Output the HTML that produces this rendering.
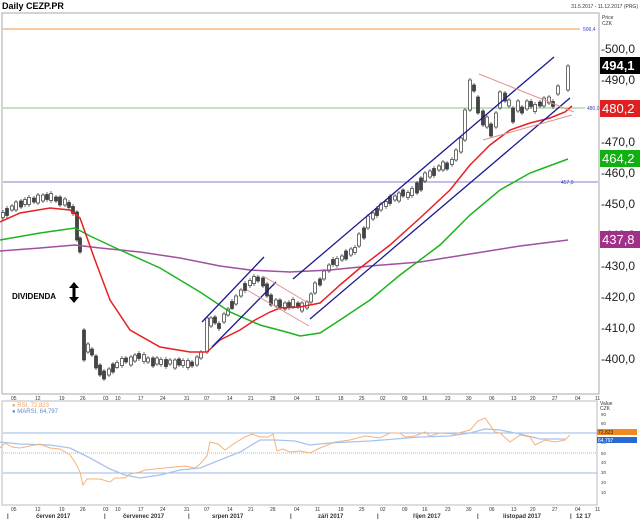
<!DOCTYPE html>
<html><head><meta charset="utf-8"><style>
html,body{margin:0;padding:0;background:#fff;width:640px;height:519px;overflow:hidden}
svg{display:block;font-family:"Liberation Sans",sans-serif}
.w{fill:#fff;stroke:#333;stroke-width:.7}.d{fill:#444;stroke:#333;stroke-width:.7}
</style></head><body>
<svg width="640" height="519" viewBox="0 0 640 519" xmlns="http://www.w3.org/2000/svg">
<text x="2" y="9" font-size="9" font-weight="bold">Daily CEZP.PR</text>
<text x="638" y="8" font-size="5" text-anchor="end" fill="#333">31.5.2017 - 11.12.2017 (PRG)</text>
<rect x="2" y="13" width="597" height="381" fill="none" stroke="#aaa" stroke-width="1"/>
<text x="602" y="19" font-size="5" fill="#333">Price</text>
<text x="602" y="25" font-size="5" fill="#333">CZK</text>
<line x1="3" y1="29" x2="580" y2="29" stroke="#f7c9a0" stroke-width="2"/>
<text x="583" y="31" font-size="5" fill="#4040c0">506,4</text>
<line x1="3" y1="108" x2="585" y2="108" stroke="#86c486" stroke-width="1"/>
<text x="587" y="110" font-size="5" fill="#4040c0">480,0</text>
<line x1="3" y1="182" x2="598" y2="182" stroke="#8080d0" stroke-width="1"/>
<text x="561" y="184" font-size="5" fill="#4040c0">457,0</text>
<path stroke="#333" stroke-width=".7" fill="none" d="M3 210V220M7 206V218M12 204V212M16 200V212M21 199V209M25 197V207M29 195V207M34 196V204M38 193V205M43 193V203M47 192V202M51 191V203M56 195V203M60 195V207M65 197V207M69 200V210M73 204V216M77 210V242M80 236V254M84 328V362M88 342V354M92 347V357M96 354V370M100 363V377M104 369V381M109 367V377M113 362V374M117 360V369M122 356V368M126 356V364M131 355V367M135 353V363M139 351V361M144 352V364M148 356V364M153 356V368M157 356V366M161 357V367M166 357V369M170 358V366M175 358V370M179 357V367M183 358V368M188 358V370M192 360V368M197 355V367M201 350V360M207 316V354M211 316V328M215 315V325M219 321V331M224 312V324M228 307V317M232 299V310M236 294V306M241 288V298M245 281V293M250 278V288M254 274V286M258 275V283M263 276V288M267 282V298M271 293V307M276 298V308M280 298V310M285 301V311M289 300V310M293 297V309M298 301V309M302 301V313M307 300V310M311 292V304M315 281V295M320 277V287M324 269V281M329 263V273M333 257V267M337 256V268M342 254V262M346 249V261M351 247V257M355 245V255M359 232V248M364 226V240M368 214V230M373 211V221M377 206V218M381 202V212M386 199V209M390 194V206M395 194V202M399 191V203M403 188V198M408 190V200M412 186V198M417 181V195M421 176V192M425 171V183M430 169V179M434 166V178M439 164V172M443 160V172M447 161V171M452 157V167M456 148V162M461 136V154M465 108V142M470 78V112M474 83V93M478 95V115M483 109V127M487 115V129M491 122V138M496 111V129M500 90V110M505 91V103M509 98V108M513 106V124M518 99V113M522 105V115M527 99V111M531 99V109M535 102V114M540 100V108M544 96V108M549 95V105M553 99V109M558 84V96M568 64V92"/>
<g>
<rect class="w" x="1.5" y="212.5" width="3" height="5"/><rect class="d" x="5.5" y="208.5" width="3" height="7"/><rect class="w" x="10.5" y="206" width="3" height="4"/><rect class="w" x="14.5" y="202" width="3" height="8"/><rect class="d" x="19.5" y="201" width="3" height="6"/><rect class="w" x="23.5" y="199.5" width="3" height="5"/><rect class="w" x="27.5" y="197.5" width="3" height="7"/><rect class="d" x="32.5" y="198" width="3" height="4"/><rect class="w" x="36.5" y="195" width="3" height="8"/><rect class="w" x="41.5" y="195" width="3" height="6"/><rect class="d" x="45.5" y="194.5" width="3" height="5"/><rect class="w" x="49.5" y="193.5" width="3" height="7"/><rect class="d" x="54.5" y="197" width="3" height="4"/><rect class="d" x="58.5" y="197" width="3" height="8"/><rect class="w" x="63.5" y="199" width="3" height="6"/><rect class="d" x="67.5" y="202.5" width="3" height="5"/><rect class="d" x="71.5" y="206.5" width="3" height="7"/><rect class="d" x="75.5" y="212" width="3" height="28"/><rect class="d" x="78.5" y="238" width="3" height="14"/><rect class="d" x="82.5" y="330" width="3" height="30"/><rect class="w" x="86.5" y="344" width="3" height="8"/><rect class="d" x="90.5" y="349" width="3" height="6"/><rect class="d" x="94.5" y="356" width="3" height="12"/><rect class="d" x="98.5" y="365" width="3" height="10"/><rect class="d" x="102.5" y="371" width="3" height="8"/><rect class="w" x="107.5" y="369" width="3" height="6"/><rect class="d" x="111.5" y="364" width="3" height="8"/><rect class="w" x="115.5" y="362.5" width="3" height="5"/><rect class="w" x="120.5" y="358.5" width="3" height="7"/><rect class="d" x="124.5" y="358" width="3" height="4"/><rect class="w" x="129.5" y="357" width="3" height="8"/><rect class="w" x="133.5" y="355" width="3" height="6"/><rect class="d" x="137.5" y="353.5" width="3" height="5"/><rect class="w" x="142.5" y="354.5" width="3" height="7"/><rect class="w" x="146.5" y="358" width="3" height="4"/><rect class="d" x="151.5" y="358" width="3" height="8"/><rect class="w" x="155.5" y="358" width="3" height="6"/><rect class="w" x="159.5" y="359.5" width="3" height="5"/><rect class="d" x="164.5" y="359.5" width="3" height="7"/><rect class="w" x="168.5" y="360" width="3" height="4"/><rect class="w" x="173.5" y="360" width="3" height="8"/><rect class="d" x="177.5" y="359" width="3" height="6"/><rect class="w" x="181.5" y="360.5" width="3" height="5"/><rect class="w" x="186.5" y="360.5" width="3" height="7"/><rect class="d" x="190.5" y="362" width="3" height="4"/><rect class="w" x="195.5" y="357" width="3" height="8"/><rect class="w" x="199.5" y="352" width="3" height="6"/><rect class="w" x="205.5" y="318" width="3" height="34"/><rect class="w" x="209.5" y="318" width="3" height="8"/><rect class="d" x="213.5" y="317" width="3" height="6"/><rect class="d" x="217.5" y="323.5" width="3" height="5"/><rect class="w" x="222.5" y="314" width="3" height="8"/><rect class="w" x="226.5" y="309" width="3" height="6"/><rect class="d" x="230.5" y="301.5" width="3" height="7"/><rect class="w" x="234.5" y="296" width="3" height="8"/><rect class="w" x="239.5" y="290" width="3" height="6"/><rect class="d" x="243.5" y="283.5" width="3" height="7"/><rect class="w" x="248.5" y="280.5" width="3" height="5"/><rect class="w" x="252.5" y="276.5" width="3" height="7"/><rect class="d" x="256.5" y="277" width="3" height="4"/><rect class="d" x="261.5" y="278" width="3" height="8"/><rect class="d" x="265.5" y="284" width="3" height="12"/><rect class="d" x="269.5" y="295" width="3" height="10"/><rect class="w" x="274.5" y="300" width="3" height="6"/><rect class="d" x="278.5" y="300" width="3" height="8"/><rect class="w" x="283.5" y="303" width="3" height="6"/><rect class="d" x="287.5" y="302.5" width="3" height="5"/><rect class="w" x="291.5" y="299.5" width="3" height="7"/><rect class="d" x="296.5" y="303" width="3" height="4"/><rect class="w" x="300.5" y="303" width="3" height="8"/><rect class="w" x="305.5" y="302" width="3" height="6"/><rect class="w" x="309.5" y="294" width="3" height="8"/><rect class="w" x="313.5" y="283" width="3" height="10"/><rect class="d" x="318.5" y="279" width="3" height="6"/><rect class="w" x="322.5" y="271" width="3" height="8"/><rect class="w" x="327.5" y="265" width="3" height="6"/><rect class="d" x="331.5" y="259.5" width="3" height="5"/><rect class="w" x="335.5" y="258.5" width="3" height="7"/><rect class="w" x="340.5" y="256" width="3" height="4"/><rect class="d" x="344.5" y="251" width="3" height="8"/><rect class="w" x="349.5" y="249" width="3" height="6"/><rect class="w" x="353.5" y="247.5" width="3" height="5"/><rect class="w" x="357.5" y="234" width="3" height="12"/><rect class="d" x="362.5" y="228" width="3" height="10"/><rect class="w" x="366.5" y="216" width="3" height="12"/><rect class="w" x="371.5" y="213" width="3" height="6"/><rect class="d" x="375.5" y="208.5" width="3" height="7"/><rect class="w" x="379.5" y="204" width="3" height="6"/><rect class="w" x="384.5" y="201.5" width="3" height="5"/><rect class="d" x="388.5" y="196.5" width="3" height="7"/><rect class="w" x="393.5" y="196" width="3" height="4"/><rect class="w" x="397.5" y="193" width="3" height="8"/><rect class="d" x="401.5" y="190" width="3" height="6"/><rect class="w" x="406.5" y="192.5" width="3" height="5"/><rect class="w" x="410.5" y="188.5" width="3" height="7"/><rect class="d" x="415.5" y="183" width="3" height="10"/><rect class="d" x="419.5" y="178" width="3" height="12"/><rect class="w" x="423.5" y="173" width="3" height="8"/><rect class="w" x="428.5" y="171" width="3" height="6"/><rect class="d" x="432.5" y="168.5" width="3" height="7"/><rect class="w" x="437.5" y="166" width="3" height="4"/><rect class="w" x="441.5" y="162" width="3" height="8"/><rect class="d" x="445.5" y="163" width="3" height="6"/><rect class="w" x="450.5" y="159.5" width="3" height="5"/><rect class="w" x="454.5" y="150" width="3" height="10"/><rect class="w" x="459.5" y="138" width="3" height="14"/><rect class="w" x="463.5" y="110" width="3" height="30"/><rect class="w" x="468.5" y="80" width="3" height="30"/><rect class="d" x="472.5" y="85" width="3" height="6"/><rect class="d" x="476.5" y="97" width="3" height="16"/><rect class="d" x="481.5" y="111" width="3" height="14"/><rect class="w" x="485.5" y="117" width="3" height="10"/><rect class="d" x="489.5" y="124" width="3" height="12"/><rect class="w" x="494.5" y="113" width="3" height="14"/><rect class="w" x="498.5" y="92" width="3" height="16"/><rect class="d" x="503.5" y="93" width="3" height="8"/><rect class="w" x="507.5" y="100" width="3" height="6"/><rect class="d" x="511.5" y="108" width="3" height="14"/><rect class="w" x="516.5" y="101" width="3" height="10"/><rect class="d" x="520.5" y="107" width="3" height="6"/><rect class="w" x="525.5" y="101" width="3" height="8"/><rect class="d" x="529.5" y="101.5" width="3" height="5"/><rect class="w" x="533.5" y="104.5" width="3" height="7"/><rect class="d" x="538.5" y="102" width="3" height="4"/><rect class="w" x="542.5" y="98" width="3" height="8"/><rect class="w" x="547.5" y="97" width="3" height="6"/><rect class="d" x="551.5" y="101.5" width="3" height="5"/><rect class="w" x="556.5" y="86" width="3" height="8"/><rect class="w" x="566.5" y="66" width="3" height="24"/>
</g>
<polyline fill="none" stroke="#a050a0" stroke-width="1.5" points="0,251 40,248 75,245 100,248 140,252 180,258 220,266 250,270 290,272 330,270 370,266 420,262 470,254 520,246 568,240"/>
<polyline fill="none" stroke="#1db31d" stroke-width="1.5" points="0,240 40,233 75,228 90,236 120,250 160,268 200,292 230,312 260,325 290,333 300,336 320,333 340,320 370,300 400,275 440,245 470,215 500,190 530,173 568,159"/>
<polyline fill="none" stroke="#e82020" stroke-width="1.5" points="0,222 20,213 50,208 70,210 80,218 95,260 110,300 130,330 160,347 190,352 207,352 220,340 240,330 255,320 270,312 280,308 300,307 320,303 340,285 360,268 390,245 420,218 450,190 470,165 490,145 510,130 530,123 550,118 565,112 572,106"/>
<g stroke="#1a1a90" stroke-width="1.3">
<line x1="212" y1="347" x2="276" y2="282"/>
<line x1="202" y1="322" x2="264" y2="257"/>
<line x1="293" y1="279" x2="554" y2="57"/>
<line x1="310" y1="319" x2="570" y2="98"/>
</g>
<g stroke="#e09090" stroke-width="1">
<line x1="479" y1="74" x2="574" y2="112"/>
<line x1="483" y1="140" x2="572" y2="115"/>
<line x1="263" y1="276" x2="310" y2="304"/>
<line x1="247" y1="290" x2="309" y2="326"/>
</g>
<text x="12" y="299" font-size="8" font-weight="bold">DIVIDENDA</text>
<path d="M74,282 L69,288 H72.5 V297 H69 L74,303 L79,297 H75.5 V288 H79 Z" fill="#000"/>
<g font-size="12" fill="#222">
<text x="601" y="53">-500,0</text><text x="601" y="84">-490,0</text><text x="601" y="146">-470,0</text><text x="601" y="177">-460,0</text><text x="601" y="208">-450,0</text><text x="601" y="239">-440,0</text><text x="601" y="270">-430,0</text><text x="601" y="301">-420,0</text><text x="601" y="332">-410,0</text><text x="601" y="363">-400,0</text>
</g>
<rect x="600" y="57" width="40" height="17" fill="#000"/><text x="602" y="70" font-size="13" font-weight="bold" fill="#fff">494,1</text>
<rect x="600" y="100" width="40" height="17" fill="#e02020"/><text x="602" y="113" font-size="13" fill="#fff">480,2</text>
<rect x="600" y="150" width="40" height="17" fill="#10b010"/><text x="602" y="163" font-size="13" fill="#fff">464,2</text>
<rect x="600" y="231" width="40" height="17" fill="#a0308a"/><text x="602" y="244" font-size="13" fill="#fff">437,8</text>
<g font-size="5" fill="#333">
<text x="11" y="400">05</text><text x="35" y="400">12</text><text x="59" y="400">19</text><text x="80" y="400">26</text><text x="103" y="400">03</text><text x="115" y="400">10</text><text x="138" y="400">17</text><text x="160" y="400">24</text><text x="184" y="400">31</text><text x="204" y="400">07</text><text x="227" y="400">14</text><text x="248" y="400">21</text><text x="270" y="400">28</text><text x="294" y="400">04</text><text x="315" y="400">11</text><text x="338" y="400">18</text><text x="359" y="400">25</text><text x="380" y="400">02</text><text x="402" y="400">09</text><text x="422" y="400">16</text><text x="445" y="400">23</text><text x="466" y="400">30</text><text x="489" y="400">06</text><text x="511" y="400">13</text><text x="530" y="400">20</text><text x="552" y="400">27</text><text x="575" y="400">04</text><text x="595" y="400">11</text>
</g>
<rect x="2" y="401" width="595" height="104" fill="none" stroke="#bbb"/>
<text x="12" y="407" font-size="6" fill="#f0a060">● RSI, 72,823</text>
<text x="12" y="413" font-size="6" fill="#5a8fd0">● MARSI, 64,797</text>
<text x="600" y="405" font-size="5" fill="#333">Value</text><text x="600" y="410" font-size="5" fill="#333">CZK</text>
<line x1="3" y1="433" x2="597" y2="433" stroke="#9ab8e8"/>
<line x1="3" y1="453" x2="597" y2="453" stroke="#9ab8e8" stroke-dasharray="1,1"/>
<line x1="3" y1="473" x2="597" y2="473" stroke="#9ab8e8"/>
<g font-size="4.5" fill="#444"><text x="601" y="416">90</text><text x="601" y="425">80</text><text x="601" y="444">60</text><text x="601" y="455">50</text><text x="601" y="464">40</text><text x="601" y="474">30</text><text x="601" y="484">20</text><text x="601" y="494">10</text></g>
<polyline fill="none" stroke="#a8c4ec" stroke-width="1.3" points="0,442 20,444 50,445 70,448 90,458 110,469 125,475 140,478 160,475 180,470 200,468 220,460 240,452 260,440 275,440 295,441 310,445 330,443 370,441 420,437 450,436 470,433 485,429 500,430 520,434 540,439 565,439"/>
<polyline fill="none" stroke="#f5b27a" stroke-width="1" points="0,448 5,443 12,447 20,448 30,446 40,444 50,448 60,449 70,455 75,462 80,472 83,485 87,479 100,479 110,482 115,478 125,478 130,474 140,472 145,470 155,469 165,468 175,467 185,466 195,468 200,464 207,456 210,442 218,444 225,450 235,443 245,437 252,434 260,437 268,437 273,434 277,451 283,449 290,452 300,451 310,453 320,448 335,442 350,440 365,436 380,438 390,433 400,433 405,437 415,436 425,432 430,436 440,433 455,434 470,430 478,421 485,418 490,425 495,432 500,433 510,442 520,435 530,437 535,445 545,440 555,442 565,440 570,435"/>
<rect x="597" y="429" width="40" height="6" fill="#f08a20"/><text x="598" y="434" font-size="5" fill="#222">72,823</text>
<rect x="597" y="437" width="40" height="6" fill="#2a6ad0"/><text x="598" y="442" font-size="5" fill="#fff">64,797</text>
<g font-size="5" fill="#333">
<text x="11" y="511">05</text><text x="35" y="511">12</text><text x="59" y="511">19</text><text x="80" y="511">26</text><text x="103" y="511">03</text><text x="115" y="511">10</text><text x="138" y="511">17</text><text x="160" y="511">24</text><text x="184" y="511">31</text><text x="204" y="511">07</text><text x="227" y="511">14</text><text x="248" y="511">21</text><text x="270" y="511">28</text><text x="294" y="511">04</text><text x="315" y="511">11</text><text x="338" y="511">18</text><text x="359" y="511">25</text><text x="380" y="511">02</text><text x="402" y="511">09</text><text x="422" y="511">16</text><text x="445" y="511">23</text><text x="466" y="511">30</text><text x="489" y="511">06</text><text x="511" y="511">13</text><text x="530" y="511">20</text><text x="552" y="511">27</text><text x="575" y="511">04</text><text x="595" y="511">11</text>
</g>
<g font-size="6" font-weight="bold" fill="#333">
<text x="36" y="518">červen 2017</text><text x="123" y="518">červenec 2017</text><text x="212" y="518">srpen 2017</text><text x="318" y="518">září 2017</text><text x="413" y="518">říjen 2017</text><text x="503" y="518">listopad 2017</text><text x="576" y="518">12 17</text>
<text x="7" y="518">|</text><text x="104" y="518">|</text><text x="188" y="518">|</text><text x="290" y="518">|</text><text x="377" y="518">|</text><text x="477" y="518">|</text><text x="570" y="518">|</text>
</g>
</svg>
</body></html>
